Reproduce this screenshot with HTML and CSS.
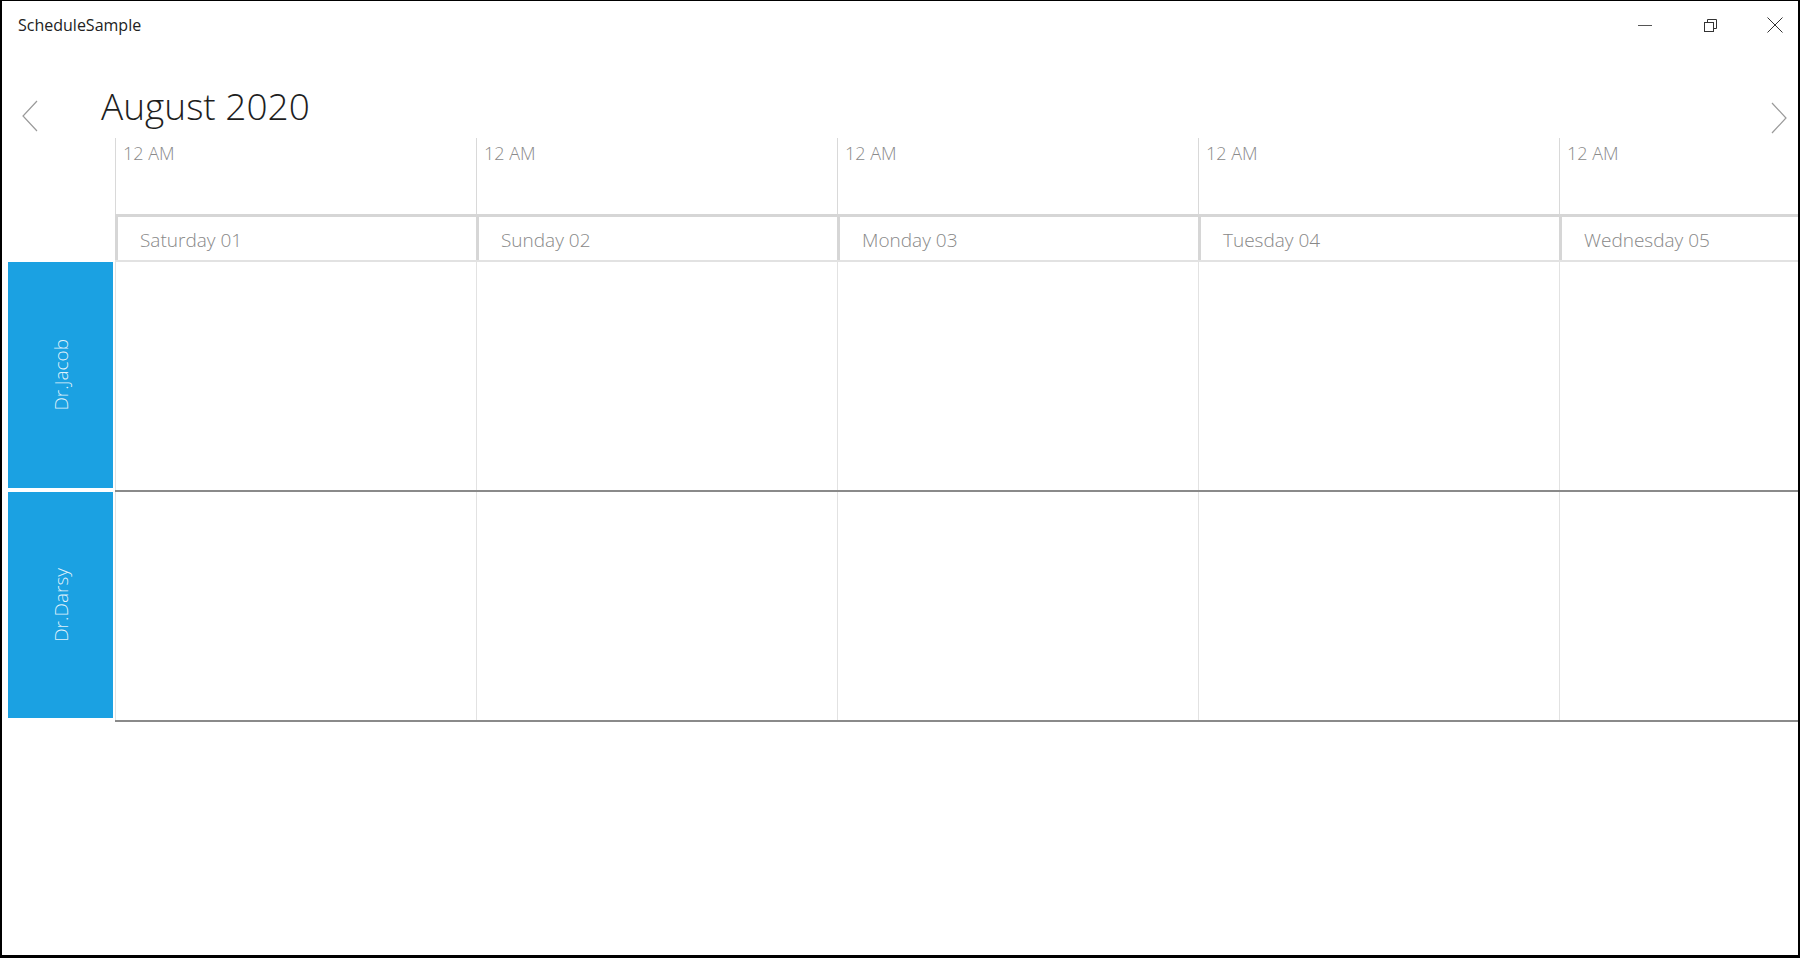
FILE: index.html
```html
<!DOCTYPE html>
<html lang="en">
<head>
    <meta charset="UTF-8">
    <meta name="viewport" content="width=device-width, initial-scale=1.0">
    <title>ScheduleSample</title>
    <link rel="stylesheet" href="styles.css">
</head>
<body>
    <div class="window">
        <header class="title-bar">
            <span class="app-title">ScheduleSample</span>
            <div class="caption-buttons">
                <button class="caption-btn" title="Minimize">
                    <svg width="16" height="16" viewBox="0 0 16 16"><line x1="1" y1="8.5" x2="15" y2="8.5" stroke="#555" stroke-width="1"/></svg>
                </button>
                <button class="caption-btn" title="Restore">
                    <svg width="16" height="16" viewBox="0 0 16 16" fill="none" stroke="#333" stroke-width="1"><rect x="2.5" y="5.5" width="9" height="9"/><path d="M5.5 5.5V2.5h9v9h-3"/></svg>
                </button>
                <button class="caption-btn" title="Close">
                    <svg width="16" height="16" viewBox="0 0 16 16" stroke="#333" stroke-width="1"><line x1="0.5" y1="0.5" x2="15.5" y2="15.5"/><line x1="15.5" y1="0.5" x2="0.5" y2="15.5"/></svg>
                </button>
            </div>
        </header>

        <main class="schedule">
            <div class="schedule-toolbar">
                <button class="nav-btn prev">
                    <svg width="16" height="32" viewBox="0 0 16 32" fill="none" stroke="#9a9a9a" stroke-width="1.2"><polyline points="15,1 1,16 15,31"/></svg>
                </button>
                <h1 class="month-title">August 2020</h1>
                <button class="nav-btn next">
                    <svg width="16" height="32" viewBox="0 0 16 32" fill="none" stroke="#9a9a9a" stroke-width="1.2"><polyline points="1,1 15,16 1,31"/></svg>
                </button>
            </div>

            <div class="timeline">
                <div class="resource-column">
                    <div class="resource-corner"></div>
                    <div class="resource"><span>Dr.Jacob</span></div>
                    <div class="resource"><span>Dr.Darsy</span></div>
                </div>

                <div class="timeline-grid">
                    <div class="time-row">
                        <div class="time-cell">12 AM</div>
                        <div class="time-cell">12 AM</div>
                        <div class="time-cell">12 AM</div>
                        <div class="time-cell">12 AM</div>
                        <div class="time-cell">12 AM</div>
                    </div>
                    <div class="date-row">
                        <div class="date-cell">Saturday 01</div>
                        <div class="date-cell">Sunday 02</div>
                        <div class="date-cell">Monday 03</div>
                        <div class="date-cell">Tuesday 04</div>
                        <div class="date-cell">Wednesday 05</div>
                    </div>
                    <div class="slot-row">
                        <div class="slot"></div>
                        <div class="slot"></div>
                        <div class="slot"></div>
                        <div class="slot"></div>
                        <div class="slot"></div>
                    </div>
                    <div class="slot-row">
                        <div class="slot"></div>
                        <div class="slot"></div>
                        <div class="slot"></div>
                        <div class="slot"></div>
                        <div class="slot"></div>
                    </div>
                </div>
            </div>
        </main>
    </div>
</body>
</html>
```

FILE: styles.css
```css
* {
    margin: 0;
    padding: 0;
    box-sizing: border-box;
    font-family: 'Open Sans', 'Noto Sans', sans-serif;
}

body {
    background: #fff;
    width: 1800px;
    height: 958px;
    overflow: hidden;
}

.window {
    width: 1800px;
    height: 958px;
    border-style: solid;
    border-color: #000;
    border-width: 1px 2px 3px 2px;
    display: flex;
    flex-direction: column;
    overflow: hidden;
}

/* Title bar */
.title-bar {
    height: 47px;
    display: flex;
    align-items: center;
    padding-left: 16px;
    flex-shrink: 0;
}

.app-title {
    font-size: 16px;
    color: #222;
}

.caption-buttons {
    margin-left: auto;
    display: flex;
    gap: 19px;
    height: 100%;
}

.caption-btn {
    width: 46px;
    height: 100%;
    border: none;
    background: none;
    display: flex;
    align-items: center;
    justify-content: center;
}

/* Month header */
.schedule {
    flex: 1;
    display: flex;
    flex-direction: column;
    min-height: 0;
}

.schedule-toolbar {
    height: 90px;
    display: flex;
    align-items: flex-start;
    flex-shrink: 0;
}

.nav-btn {
    border: none;
    background: none;
    display: flex;
}

.nav-btn.prev {
    margin: 52px 0 0 20px;
}

.nav-btn.next {
    margin: 54px 11px 0 auto;
}

.month-title {
    font-size: 37px;
    font-weight: 300;
    line-height: 44px;
    color: #1e1e1e;
    margin: 36px 0 0 63px;
}

/* Timeline */
.timeline {
    display: flex;
    padding-left: 6px;
    min-width: 0;
}

.resource-column {
    width: 105px;
    flex-shrink: 0;
    margin-right: 2px;
}

.resource-corner {
    height: 124px;
}

.resource {
    height: 226px;
    margin-bottom: 4px;
    background: #1ba1e2;
    display: flex;
    align-items: center;
    justify-content: center;
}

.resource span {
    writing-mode: vertical-rl;
    transform: rotate(180deg);
    font-size: 19px;
    font-weight: 300;
    color: rgba(255, 255, 255, 0.88);
}

.timeline-grid {
    flex: 1;
    min-width: 0;
    overflow: hidden;
}

.time-row,
.date-row,
.slot-row {
    display: flex;
    width: max-content;
    min-width: 100%;
}

.time-cell,
.date-cell,
.slot {
    flex: 0 0 361px;
}

.time-row {
    height: 76px;
}

.time-cell {
    border-left: 1px solid #d9d9d9;
    padding: 5px 0 0 7px;
    font-size: 18px;
    font-weight: 300;
    line-height: 20px;
    color: #8a8a8a;
}

.date-row {
    border-top: 3px solid #d6d6d6;
    border-bottom: 2px solid #e2e2e2;
}

.date-cell {
    height: 43px;
    border-left: 3px solid #d6d6d6;
    padding: 3px 0 0 22px;
    font-size: 19px;
    font-weight: 300;
    line-height: 40px;
    color: #888;
}

.slot-row {
    height: 230px;
    border-bottom: 2px solid #8a8a8a;
}

.slot {
    border-left: 1px solid #e2e2e2;
}
```
